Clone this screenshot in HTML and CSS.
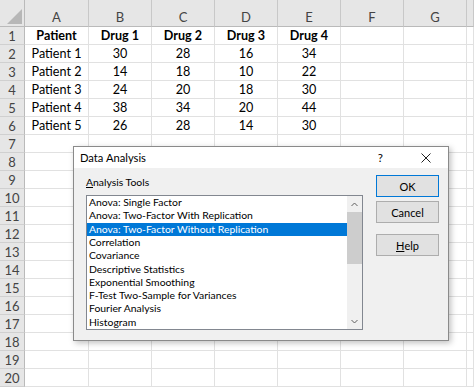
FILE: index.html
```html
<!DOCTYPE html>
<html>
<head>
<meta charset="utf-8">
<link rel="stylesheet" href="styles.css">
</head>
<body>
<div class="sheet">
  <div class="hd corner"><span class="tri"></span></div>
  <div class="hd col">A</div><div class="hd col">B</div><div class="hd col">C</div><div class="hd col">D</div><div class="hd col">E</div><div class="hd col">F</div><div class="hd col">G</div><div class="hd col"></div>

  <div class="rh">1</div><div class="c b">Patient</div><div class="c b">Drug 1</div><div class="c b">Drug 2</div><div class="c b">Drug 3</div><div class="c b">Drug 4</div><div class="c"></div><div class="c"></div><div class="c"></div>
  <div class="rh">2</div><div class="c">Patient 1</div><div class="c">30</div><div class="c">28</div><div class="c">16</div><div class="c">34</div><div class="c"></div><div class="c"></div><div class="c"></div>
  <div class="rh">3</div><div class="c">Patient 2</div><div class="c">14</div><div class="c">18</div><div class="c">10</div><div class="c">22</div><div class="c"></div><div class="c"></div><div class="c"></div>
  <div class="rh">4</div><div class="c">Patient 3</div><div class="c">24</div><div class="c">20</div><div class="c">18</div><div class="c">30</div><div class="c"></div><div class="c"></div><div class="c"></div>
  <div class="rh">5</div><div class="c">Patient 4</div><div class="c">38</div><div class="c">34</div><div class="c">20</div><div class="c">44</div><div class="c"></div><div class="c"></div><div class="c"></div>
  <div class="rh">6</div><div class="c">Patient 5</div><div class="c">26</div><div class="c">28</div><div class="c">14</div><div class="c">30</div><div class="c"></div><div class="c"></div><div class="c"></div>
  <div class="rh">7</div><div class="c"></div><div class="c"></div><div class="c"></div><div class="c"></div><div class="c"></div><div class="c"></div><div class="c"></div><div class="c"></div>
  <div class="rh">8</div><div class="c"></div><div class="c"></div><div class="c"></div><div class="c"></div><div class="c"></div><div class="c"></div><div class="c"></div><div class="c"></div>
  <div class="rh">9</div><div class="c"></div><div class="c"></div><div class="c"></div><div class="c"></div><div class="c"></div><div class="c"></div><div class="c"></div><div class="c"></div>
  <div class="rh">10</div><div class="c"></div><div class="c"></div><div class="c"></div><div class="c"></div><div class="c"></div><div class="c"></div><div class="c"></div><div class="c"></div>
  <div class="rh">11</div><div class="c"></div><div class="c"></div><div class="c"></div><div class="c"></div><div class="c"></div><div class="c"></div><div class="c"></div><div class="c"></div>
  <div class="rh">12</div><div class="c"></div><div class="c"></div><div class="c"></div><div class="c"></div><div class="c"></div><div class="c"></div><div class="c"></div><div class="c"></div>
  <div class="rh">13</div><div class="c"></div><div class="c"></div><div class="c"></div><div class="c"></div><div class="c"></div><div class="c"></div><div class="c"></div><div class="c"></div>
  <div class="rh">14</div><div class="c"></div><div class="c"></div><div class="c"></div><div class="c"></div><div class="c"></div><div class="c"></div><div class="c"></div><div class="c"></div>
  <div class="rh">15</div><div class="c"></div><div class="c"></div><div class="c"></div><div class="c"></div><div class="c"></div><div class="c"></div><div class="c"></div><div class="c"></div>
  <div class="rh">16</div><div class="c"></div><div class="c"></div><div class="c"></div><div class="c"></div><div class="c"></div><div class="c"></div><div class="c"></div><div class="c"></div>
  <div class="rh">17</div><div class="c"></div><div class="c"></div><div class="c"></div><div class="c"></div><div class="c"></div><div class="c"></div><div class="c"></div><div class="c"></div>
  <div class="rh">18</div><div class="c"></div><div class="c"></div><div class="c"></div><div class="c"></div><div class="c"></div><div class="c"></div><div class="c"></div><div class="c"></div>
  <div class="rh">19</div><div class="c"></div><div class="c"></div><div class="c"></div><div class="c"></div><div class="c"></div><div class="c"></div><div class="c"></div><div class="c"></div>
  <div class="rh">20</div><div class="c"></div><div class="c"></div><div class="c"></div><div class="c"></div><div class="c"></div><div class="c"></div><div class="c"></div><div class="c"></div>
</div>

<div class="dialog">
  <div class="titlebar">
    <span class="title">Data Analysis</span>
    <span class="help-q">?</span>
    <svg class="close" width="10" height="10" viewBox="0 0 10 10"><path d="M0.5 0.5 L9.5 9.5 M9.5 0.5 L0.5 9.5" stroke="#222" stroke-width="1" fill="none"/></svg>
  </div>
  <div class="body">
    <div class="left">
      <div class="label"><u>A</u>nalysis Tools</div>
      <div class="listbox">
        <ul class="items">
          <li>Anova: Single Factor</li>
          <li>Anova: Two-Factor With Replication</li>
          <li class="sel">Anova: Two-Factor Without Replication</li>
          <li>Correlation</li>
          <li>Covariance</li>
          <li>Descriptive Statistics</li>
          <li>Exponential Smoothing</li>
          <li>F-Test Two-Sample for Variances</li>
          <li>Fourier Analysis</li>
          <li>Histogram</li>
        </ul>
        <div class="scroll">
          <svg class="arrow" width="15" height="16" viewBox="0 0 15 16"><polyline points="4.5,10 7.5,7 10.5,10" stroke="#606060" stroke-width="1" fill="none"/></svg>
          <div class="thumb"></div>
          <div class="track"></div>
          <svg class="arrow" width="15" height="16" viewBox="0 0 15 16"><polyline points="4.5,7 7.5,10 10.5,7" stroke="#606060" stroke-width="1" fill="none"/></svg>
        </div>
      </div>
    </div>
    <div class="buttons">
      <div class="btn default">OK</div>
      <div class="btn">Cancel</div>
      <div class="btn spaced"><u>H</u>elp</div>
    </div>
  </div>
</div>
</body>
</html>
```

FILE: styles.css
```css
html, body {
  margin: 0;
  padding: 0;
  background: #ffffff;
  overflow: hidden;
}
body {
  width: 474px;
  height: 387px;
  position: relative;
  font-family: "Lato", "Open Sans", sans-serif;
}
.sheet {
  display: grid;
  grid-template-columns: 25px 64px 63px 63px 63px 63px 63px 63px 1fr;
  grid-template-rows: 27px;
  grid-auto-rows: 18px;
  width: 474px;
}
.hd {
  background: #e6e6e6;
  border-right: 1px solid #c8c8c8;
  border-bottom: 1px solid #bababa;
  box-sizing: border-box;
  color: #444;
  font-size: 13px;
  display: flex;
  align-items: flex-end;
  justify-content: center;
  padding-bottom: 1px;
}
.corner {
  position: relative;
  border-right: 1px solid #bababa;
}
.tri {
  position: absolute;
  right: 2px;
  bottom: 2px;
  width: 0;
  height: 0;
  border-left: 15px solid transparent;
  border-bottom: 15px solid #b7b7b7;
}
.rh {
  background: #e6e6e6;
  border-right: 1px solid #bababa;
  border-bottom: 1px solid #d0d0d0;
  box-sizing: border-box;
  color: #444;
  font-size: 13px;
  display: flex;
  align-items: center;
  justify-content: center;
}
.c {
  border-right: 1px solid #e1e1e1;
  border-bottom: 1px solid #e1e1e1;
  box-sizing: border-box;
  font-size: 12.6px;
  color: #000;
  display: flex;
  align-items: center;
  justify-content: center;
  white-space: nowrap;
}
.b { font-weight: bold; }

.dialog {
  position: absolute;
  left: 73px;
  top: 146px;
  width: 376px;
  height: 195px;
  box-sizing: border-box;
  border: 1px solid #8a8a8a;
  background: #f0f0f0;
  box-shadow: 2px 2px 6px rgba(0,0,0,0.25);
  font-family: "Lato", "Noto Sans", sans-serif;
  font-size: 10.4px;
  color: #000;
  display: flex;
  flex-direction: column;
}
.titlebar {
  height: 26px;
  background: #ffffff;
  display: flex;
  align-items: center;
  padding-left: 6px;
}
.title {
  font-size: 11.2px;
  flex: 1;
}
.help-q {
  font-size: 11.5px;
  margin-right: 38px;
}
.close {
  margin-right: 17px;
}
.body {
  flex: 1;
  display: flex;
  padding: 6px 9px 10px 12px;
}
.left {
  display: flex;
  flex-direction: column;
  width: 277px;
}
.label {
  height: 16px;
  line-height: 16px;
  margin-bottom: 5px;
}
.listbox {
  flex: 1;
  display: flex;
  border: 1px solid #828790;
  background: #fff;
  overflow: hidden;
}
.items {
  list-style: none;
  margin: 0;
  padding: 0;
  flex: 1;
}
.items li {
  height: 13.3px;
  line-height: 13.3px;
  padding-left: 2px;
  white-space: nowrap;
}
.items li.sel {
  background: #0078d7;
  color: #fff;
}
.scroll {
  width: 15px;
  background: #f0f0f0;
  display: flex;
  flex-direction: column;
}
.arrow { display: block; }
.thumb {
  height: 52px;
  background: #cdcdcd;
}
.track { flex: 1; }
.buttons {
  margin-left: 13px;
  display: flex;
  flex-direction: column;
  gap: 4px;
  padding-top: 1px;
}
.btn {
  width: 63px;
  height: 22px;
  box-sizing: border-box;
  border: 1px solid #adadad;
  background: #e1e1e1;
  display: flex;
  align-items: center;
  justify-content: center;
  font-size: 11px;
}
.btn.default {
  border: 1px solid #0078d7;
}
.btn.spaced {
  margin-top: 7px;
}
```
